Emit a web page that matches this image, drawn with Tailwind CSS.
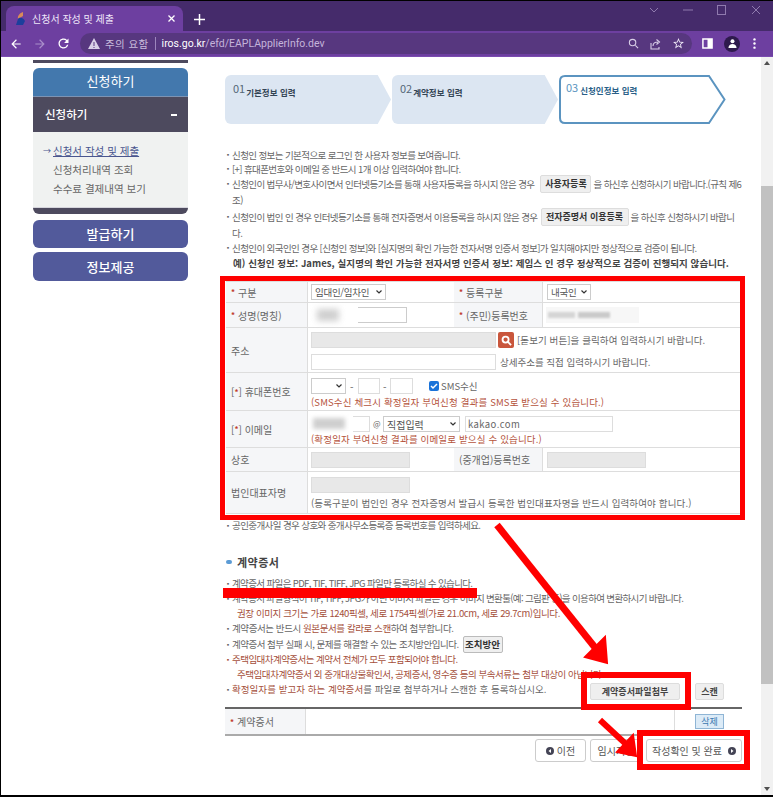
<!DOCTYPE html>
<html lang="ko"><head><meta charset="utf-8"><script src="https://cdn.jsdelivr.net/npm/@tailwindcss/browser@4"></script></head>
<body class="w-[773px] h-[797px] overflow-hidden bg-black font-['Noto_Sans_CJK_KR','Noto_Sans',sans-serif] text-[10px] text-[#666]">
<div class="relative w-[773px] h-[795px] pt-px pl-px bg-black overflow-hidden">
  <!-- browser chrome -->
  <div class="h-[30px] bg-[#452b6b] flex items-end pl-[5px] relative">
    <div class="w-[177px] h-[25px] bg-[#6d3fa0] rounded-t-lg flex items-center pl-[10px] pr-[8px] gap-[7px]">
      <svg class="shrink-0" width="9" height="13" viewBox="0 0 9 13"><path d="M7 0C4 1 1 4 2 7L7 4Z" fill="#d98a5a"/><path d="M2 7C3 5 7 5 9 9L7 13H0Z" fill="#1c3f9c"/></svg>
      <span class="text-[10px] text-[#f0e8fa] flex-1 whitespace-nowrap">신청서 작성 및 제출</span>
      <svg class="shrink-0" width="7" height="7" viewBox="0 0 7 7" stroke="#fff" stroke-width="1.300"><path d="M.5.5l6 6M6.500.5l-6 6"/></svg>
    </div>
    <svg class="ml-[11px] mb-[6px]" width="11" height="11" viewBox="0 0 11 11" stroke="#fff" stroke-width="1.500"><path d="M5.500 0v11M0 5.500h11"/></svg>
    <div class="absolute left-[648px] top-[4px] flex items-center gap-[24px] text-[#8f7aae]">
      <svg width="10" height="10" viewBox="0 0 10 10" fill="none" stroke="currentColor"><path d="M1 3l4 4 4-4"/></svg>
      <svg width="10" height="10" viewBox="0 0 10 10" stroke="currentColor"><path d="M0 5h10"/></svg>
      <svg width="10" height="10" viewBox="0 0 10 10" fill="none" stroke="currentColor"><rect x=".5" y=".5" width="8" height="9"/></svg>
      <svg width="10" height="10" viewBox="0 0 10 10" stroke="currentColor"><path d="M1 1l8 8M9 1l-8 8"/></svg>
    </div>
  </div>
  <div class="h-[26px] bg-[#6d3fa0] flex items-center border-b border-[#7a4bb0] pl-[8px] text-white">
    <svg class="w-[14px] h-[14px]" viewBox="0 0 24 24" fill="#fff"><path d="M20 11H7.830l5.590-5.590L12 4l-8 8 8 8 1.410-1.410L7.830 13H20v-2z"/></svg>
    <svg class="w-[14px] h-[14px] ml-[10px]" viewBox="0 0 24 24" fill="#a98fca"><path d="M12 4l-1.410 1.410L16.170 11H4v2h12.170l-5.580 5.590L12 20l8-8z"/></svg>
    <svg class="w-[15px] h-[15px] ml-[9px]" viewBox="0 0 24 24" fill="#fff"><path d="M17.650 6.350A7.958 7.958 0 0012 4c-4.420 0-7.990 3.580-7.990 8s3.570 8 7.990 8c3.730 0 6.840-2.550 7.730-6h-2.080A5.990 5.990 0 0112 18c-3.310 0-6-2.690-6-6s2.690-6 6-6c1.660 0 3.140.690 4.220 1.780L13 11h7V4l-2.350 2.350z"/></svg>
    <div class="ml-[9px] w-[612px] h-[21px] rounded-full bg-[#57377f] flex items-center pl-[8px] pr-[7px]">
      <svg width="12" height="11" viewBox="0 0 12 11"><path d="M6 0l6 11H0z" fill="#d9cfe8"/><path d="M5.500 4h1v4h-1zM5.500 9h1v1h-1z" fill="#57377f"/></svg>
      <span class="ml-[5px] text-[10.500px] tracking-[0.4px] text-[#c9bcdc] whitespace-nowrap">주의 요함</span>
      <span class="ml-[6px] h-[13px] w-px bg-[#9d86bd]"></span>
      <span class="ml-[6px] text-[10.500px] font-['Roboto'] text-[#c4b4da] whitespace-nowrap"><span class="text-white">iros.go.kr</span>/efd/EAPLApplierInfo.dev</span>
      <span class="flex-1"></span>
      <svg width="11" height="11" viewBox="0 0 12 12" fill="none" stroke="#d9cfe8" stroke-width="1.200"><circle cx="5" cy="5" r="3.500"/><path d="M8 8l3 3"/></svg>
      <svg class="ml-[10px]" width="13" height="12" viewBox="0 0 13 12" fill="none" stroke="#d9cfe8" stroke-width="1.100"><path d="M2 5v6h8V9M4 8c0-3 2-4 5-4M7.500 1.500l3 2.500-3 2.500"/></svg>
      <svg class="ml-[10px]" width="13" height="13" viewBox="0 0 24 24" fill="#efe9f7"><path d="M22 9.240l-7.190-.620L12 2 9.190 8.630 2 9.240l5.460 4.730L5.820 21 12 17.270 18.180 21l-1.630-7.030L22 9.240zM12 15.400l-3.760 2.270 1-4.280-3.320-2.880 4.380-.380L12 6.100l1.710 4.040 4.380.380-3.320 2.880 1 4.280L12 15.400z"/></svg>
    </div>
    <svg class="ml-[10px]" width="11" height="11" viewBox="0 0 12 12"><path d="M1 1h10v10H1z" fill="none" stroke="#fff" stroke-width="1.600"/><path d="M6 1h5v10H6z" fill="#fff"/></svg>
    <div class="ml-[11px] w-[16px] h-[16px] rounded-full bg-[#2e1a4d] flex items-center justify-center"><svg width="9" height="9" viewBox="0 0 9 10" fill="#fff"><circle cx="4.500" cy="2.500" r="2.200"/><path d="M0 10c0-6 9-6 9 0z"/></svg></div>
    <svg class="ml-[13px]" width="3" height="11" viewBox="0 0 3 12" fill="#fff"><circle cx="1.500" cy="1.500" r="1.300"/><circle cx="1.500" cy="6" r="1.300"/><circle cx="1.500" cy="10.500" r="1.300"/></svg>
  </div>

  <!-- page -->
  <div class="h-[738px] bg-white flex">
    <!-- sidebar -->
    <aside class="w-[187px] shrink-0 pl-[32px] pt-[3px]">
      <div class="h-[3px] bg-[#4d4a5e]"></div>
      <div class="mt-[5px] h-[29px] rounded-t-[6px] bg-[#4378ad] text-white text-[13px] flex items-center justify-center border-b border-[#7d93b3] pb-[2px]">신청하기</div>
      <div class="h-[35px] bg-[#4d4a5e] text-white text-[11.500px] font-medium flex items-center justify-between pl-[12px] pr-[11px]"><span>신청하기</span><span class="w-[6px] h-[2px] bg-white"></span></div>
      <div class="h-[76px] bg-[#f0f2f1] pl-[20px] pt-[9px] text-[10.500px] leading-[19px] text-[#666] border-b border-[#d5d5dc]">
        <div class="relative underline text-[#4a568f]"><span class="absolute -left-[10px] text-[8px] no-underline">→</span>신청서 작성 및 제출</div>
        <div>신청처리내역 조회</div>
        <div>수수료 결제내역 보기</div>
      </div>
      <div class="h-[6px] rounded-b-[6px] bg-[#4d4a5e]"></div>
      <div class="mt-[6px] h-[28px] rounded-[6px] bg-[#525a9b] text-white text-[13px] font-medium flex items-center justify-center">발급하기</div>
      <div class="mt-[4px] h-[29px] rounded-[6px] bg-[#525a9b] text-white text-[13px] font-medium flex items-center justify-center">정보제공</div>
    </aside>

    <!-- main -->
    <main class="w-[573px] shrink-0 pl-[37px]">
      <!-- steps -->
      <div class="mt-[18px] flex h-[49px] gap-px">
        <div class="w-[166px] h-[49px] bg-[#dce6f2] rounded-l-[6px] [clip-path:polygon(0_0,92%_0,100%_50%,92%_100%,0_100%)] pl-[8px] pt-[5px] flex items-start text-[#567]"><span class="text-[11px]">01</span><span class="mt-[6px] ml-px text-[8.500px] font-bold text-[#345]">기본정보 입력</span></div>
        <div class="w-[166px] h-[49px] bg-[#dce6f2] rounded-l-[6px] [clip-path:polygon(0_0,92%_0,100%_50%,92%_100%,0_100%)] pl-[8px] pt-[5px] flex items-start text-[#567]"><span class="text-[11px]">02</span><span class="mt-[6px] ml-px text-[8.500px] font-bold text-[#345]">계약정보 입력</span></div>
        <div class="relative w-[167px] h-[49px]">
          <svg class="absolute inset-0" width="167" height="49" viewBox="0 0 167 49"><path d="M6 1H150L165.500 24.500L150 48H6Q1 48 1 43V6Q1 1 6 1Z" fill="#fff" stroke="#5b94c0" stroke-width="2"/></svg>
          <div class="relative pl-[7px] pt-[4px] flex items-start"><span class="text-[11px] text-[#5b94c0]">03</span><span class="mt-[5px] ml-[2px] text-[8.500px] font-bold text-[#2a5f88]">신청인정보 입력</span></div>
        </div>
      </div>

      <!-- notices -->
      <ul class="mt-[24px] text-[9.500px] leading-[14px] text-[#666] tracking-[-0.6px] whitespace-nowrap">
        <li class="pl-[7px] relative before:content-['▪'] before:absolute before:left-0 before:text-[6px]">신청인 정보는 기본적으로 로그인 한 사용자 정보를 보여줍니다.</li>
        <li class="pl-[7px] relative before:content-['▪'] before:absolute before:left-0 before:text-[6px]">[+] 휴대폰번호와 이메일 중 반드시 1개 이상 입력하여야 합니다.</li>
        <li class="pl-[7px] relative before:content-['▪'] before:absolute before:left-0 before:text-[6px] before:top-[2px]"><div class="flex items-center h-[18px] -mt-px">신청인이 법무사/변호사이면서 인터넷등기소를 통해 사용자등록을 하시지 않은 경우<span class="ml-[6px] mr-[2px] w-[51px] h-[18px] leading-[16px] text-center bg-[#efefef] border border-[#ddd] rounded-[2px] font-bold text-[#333] tracking-normal text-[9px]">사용자등록</span>을 하신후 신청하시기 바랍니다.(규칙 제6</div><div class="h-[14px]">조)</div></li>
        <li class="pl-[7px] relative mt-[1px] before:content-['▪'] before:absolute before:left-0 before:text-[6px] before:top-[2px]"><div class="flex items-center h-[18px]">신청인이 법인 인 경우 인터넷등기소를 통해 전자증명서 이용등록을 하시지 않은 경우<span class="ml-[3px] mr-[2px] w-[88px] h-[18px] leading-[16px] text-center bg-[#efefef] border border-[#ddd] rounded-[2px] font-bold text-[#333] tracking-normal text-[9px]">전자증명서 이용등록</span>을 하신후 신청하시기 바랍니</div><div class="h-[15px]">다.</div></li>
        <li class="pl-[7px] relative before:content-['▪'] before:absolute before:left-0 before:text-[6px]">신청인이 외국인인 경우 [신청인 정보]와 [실지명의 확인 가능한 전자서명 인증서 정보]가 일치해야지만 정상적으로 검증이 됩니다.</li>
        <li class="pl-[8px] font-bold text-[#444] tracking-[0.07px] leading-[15px] mt-[1px]">예) 신청인 정보: James, 실지명의 확인 가능한 전자서명 인증서 정보: 제임스 인 경우 정상적으로 검증이 진행되지 않습니다.</li>
      </ul>

      <!-- form table -->
      <div class="mt-[10px] ml-px w-[514px] border-t border-[#ddd] text-[10px] text-[#666]">
        <div class="grid grid-cols-[81px_147px_88px_1fr] h-[21px] border-b border-[#ddd]">
          <div class="bg-[#f5f6f8] flex items-center pl-[5px]"><b class="text-[#c0392b] mr-[3px] text-[8px]">*</b>구분</div>
          <div class="flex items-center pl-[3px] border-l border-[#ddd]"><span class="w-[75px] h-[16px] border border-[#ccc] flex items-center justify-between px-[3px] text-[#555] whitespace-nowrap text-[9.500px] tracking-[-0.3px]">임대인/임차인<svg class="shrink-0" width="6" height="4" viewBox="0 0 6 4" fill="none" stroke="#333" stroke-width="1.200"><path d="M.5.500l2.500 2.500L5.500.500"/></svg></span></div>
          <div class="bg-[#f5f6f8] flex items-center pl-[5px]"><b class="text-[#c0392b] mr-[3px] text-[8px]">*</b>등록구분</div>
          <div class="flex items-center pl-[4px] border-l border-[#ddd]"><span class="w-[44px] h-[16px] border border-[#ccc] flex items-center justify-between px-[3px] text-[#555] whitespace-nowrap text-[9.500px] tracking-[-0.3px]">내국인<svg class="shrink-0" width="6" height="4" viewBox="0 0 6 4" fill="none" stroke="#333" stroke-width="1.200"><path d="M.5.500l2.500 2.500L5.500.500"/></svg></span></div>
        </div>
        <div class="grid grid-cols-[81px_147px_88px_1fr] h-[25px] border-b border-[#ddd]">
          <div class="bg-[#f5f6f8] flex items-center pl-[5px]"><b class="text-[#c0392b] mr-[3px] text-[8px]">*</b>성명(명칭)</div>
          <div class="flex items-center pl-[3px] border-l border-[#ddd]"><span class="relative w-[96px] h-[16px] border border-[#ccc]"><span class="absolute -left-px -top-px w-[47px] h-[16px] bg-white"></span><span class="absolute left-[5px] top-[1px] w-[22px] h-[12px] bg-[#cfcfcf] blur-[3px]"></span></span></div>
          <div class="bg-[#f5f6f8] flex items-center pl-[5px]"><b class="text-[#c0392b] mr-[3px] text-[8px]">*</b>(주민)등록번호</div>
          <div class="flex items-center pl-[3px] border-l border-[#ddd]"><span class="w-[93px] h-[16px] bg-[#f7f7f7] flex items-center pl-[2px] gap-[3px]"><span class="w-[27px] h-[6px] bg-[#d5d5d5] blur-[1px]"></span><span class="w-[32px] h-[6px] bg-[#cacaca] blur-[1px]"></span></span></div>
        </div>
        <div class="grid grid-cols-[81px_1fr] h-[45px] border-b border-[#ddd]">
          <div class="bg-[#f5f6f8] flex items-center pl-[5px]">주소</div>
          <div class="border-l border-[#ddd] pl-[3px] pt-[4px] flex flex-col gap-[6px]">
            <div class="flex items-center h-[16px]"><span class="w-[185px] h-[16px] bg-[#e8e8e8] border border-[#ddd]"></span><span class="ml-[2px] w-[16px] h-[16px] rounded-[2px] bg-[#c9563c] flex items-center justify-center"><svg width="11" height="11" viewBox="0 0 12 12" fill="none" stroke="#fff" stroke-width="2"><circle cx="5" cy="5" r="3.300"/><path d="M7.500 7.500l3.500 3.500"/></svg></span><span class="ml-[3px] whitespace-nowrap text-[9.500px] tracking-[0.1px]">[돋보기 버튼]을 클릭하여 입력하시기 바랍니다.</span></div>
            <div class="flex items-center h-[16px]"><span class="w-[185px] h-[16px] border border-[#ddd]"></span><span class="ml-[4px] whitespace-nowrap text-[9.500px]">상세주소를 직접 입력하시기 바랍니다.</span></div>
          </div>
        </div>
        <div class="grid grid-cols-[81px_1fr] h-[38px] border-b border-[#ddd]">
          <div class="bg-[#f5f6f8] flex items-center pl-[5px]">[<b class="text-[#c0392b] text-[8px]">*</b>] 휴대폰번호</div>
          <div class="border-l border-[#ddd] pl-[3px] pt-[5px]">
            <div class="flex items-center h-[16px]"><span class="w-[35px] h-[16px] border border-[#ccc] flex items-center justify-end pr-[3px]"><svg width="6" height="4" viewBox="0 0 6 4" fill="none" stroke="#333" stroke-width="1.200"><path d="M.5.500l2.500 2.500L5.500.500"/></svg></span><span class="mx-[4px] w-[4px]">-</span><span class="w-[22px] h-[16px] border border-[#ddd]"></span><span class="mx-[3px] w-[4px]">-</span><span class="w-[23px] h-[16px] border border-[#ddd]"></span><span class="ml-[16px] w-[10px] h-[10px] rounded-[2px] bg-[#1a73d9] flex items-center justify-center"><svg width="8" height="8" viewBox="0 0 8 8" fill="none" stroke="#fff" stroke-width="1.500"><path d="M1 4l2 2 4-4"/></svg></span><span class="ml-[2px] text-[9.500px]">SMS수신</span></div>
            <div class="mt-px text-[#b5533c] text-[9.500px] leading-[14px] whitespace-nowrap tracking-[0.15px]">(SMS수신 체크시 확정일자 부여신청 결과를 SMS로 받으실 수 있습니다.)</div>
          </div>
        </div>
        <div class="grid grid-cols-[81px_1fr] h-[37px] border-b border-[#ddd]">
          <div class="bg-[#f5f6f8] flex items-center pl-[5px]">[<b class="text-[#c0392b] text-[8px]">*</b>] 이메일</div>
          <div class="border-l border-[#ddd] pl-[3px] pt-[5px]">
            <div class="flex items-center h-[16px]"><span class="relative w-[59px] h-[16px] border border-[#ddd]"><span class="absolute -left-px -top-px -bottom-px w-[42px] bg-white"></span><span class="absolute left-[1px] top-[1px] w-[32px] h-[11px] bg-[#cfcfcf] blur-[2px]"></span></span><span class="mx-[3px] w-[7px] text-[8px]">@</span><span class="w-[77px] h-[16px] border border-[#ccc] flex items-center justify-between px-[3px] text-[#555]">직접입력<svg width="6" height="4" viewBox="0 0 6 4" fill="none" stroke="#333" stroke-width="1.200"><path d="M.5.500l2.500 2.500L5.500.500"/></svg></span><span class="ml-[5px] w-[148px] h-[16px] border border-[#ddd] pl-[2px] leading-[15px] text-[9.500px] tracking-[0.4px]">kakao.com</span></div>
            <div class="text-[#b5533c] text-[9.500px] leading-[15px] whitespace-nowrap tracking-[0.15px]">(확정일자 부여신청 결과를 이메일로 받으실 수 있습니다.)</div>
          </div>
        </div>
        <div class="grid grid-cols-[81px_147px_88px_1fr] h-[24px] border-b border-[#ddd]">
          <div class="bg-[#f5f6f8] flex items-center pl-[5px]">상호</div>
          <div class="flex items-center pl-[3px] border-l border-[#ddd]"><span class="w-[99px] h-[16px] bg-[#e8e8e8] border border-[#ddd]"></span></div>
          <div class="bg-[#f5f6f8] flex items-center pl-[5px]">(중개업)등록번호</div>
          <div class="flex items-center pl-[4px] border-l border-[#ddd]"><span class="w-[99px] h-[16px] bg-[#e8e8e8] border border-[#ddd]"></span></div>
        </div>
        <div class="grid grid-cols-[81px_1fr] h-[42px] border-b border-[#ddd]">
          <div class="bg-[#f5f6f8] flex items-center pl-[5px]">법인대표자명</div>
          <div class="border-l border-[#ddd] pl-[3px] pt-[5px]"><div class="w-[99px] h-[16px] bg-[#e8e8e8] border border-[#ddd]"></div><div class="mt-[3px] text-[9.500px] leading-[14px] whitespace-nowrap tracking-[0.13px]">(등록구분이 법인인 경우 전자증명서 발급시 등록한 법인대표자명을 반드시 입력하여야 합니다.)</div></div>
        </div>
      </div>
      <div class="mt-[4px] pl-[7px] relative text-[9.500px] leading-[15px] text-[#666] tracking-[-0.6px] before:content-['▪'] before:absolute before:left-0 before:text-[6px]">공인중개사일 경우 상호와 중개사무소등록증 등록번호를 입력하세요.</div>

      <!-- contract -->
      <div class="mt-[21px] flex items-center h-[16px] text-[11px] tracking-[0.5px] font-bold text-[#444]"><span class="ml-px w-[6px] h-[4px] rounded-full bg-[#5b9bd5] mr-[5px]"></span>계약증서</div>
      <ul class="mt-[6px] text-[9.500px] leading-[15px] text-[#666] whitespace-nowrap">
        <li class="pl-[7px] relative tracking-[-0.63px] before:content-['▪'] before:absolute before:left-0 before:text-[6px]">계약증서 파일은 PDF, TIF, TIFF, JPG 파일만 등록하실 수 있습니다.</li>
        <li class="pl-[7px] relative tracking-[-0.65px] before:content-['▪'] before:absolute before:left-0 before:text-[6px]">계약증서 파일형식이 TIF, TIFF, JPG가 아닌 이미지 파일은 경우 이미지 변환툴(예: 그림판 등)을 이용하여 변환하시기 바랍니다.</li>
        <li class="pl-[12px] tracking-[-0.4px] text-[#a5503c]">권장 이미지 크기는 가로 1240픽셀, 세로 1754픽셀(가로 21.0cm, 세로 29.7cm)입니다.</li>
        <li class="pl-[7px] relative tracking-[-0.42px] before:content-['▪'] before:absolute before:left-0 before:text-[6px]">계약증서는 반드시 <span class="text-[#a5503c]">원본문서를 칼라로 스캔</span>하여 첨부합니다.</li>
        <li class="pl-[7px] h-[16px] relative flex items-center tracking-[-0.53px] before:content-['▪'] before:absolute before:left-0 before:text-[6px]">계약증서 첨부 실패 시, 문제를 해결할 수 있는 조치방안입니다.<span class="ml-[4px] w-[40px] h-[17px] text-center leading-[15px] bg-[#efefef] border border-[#bbb] rounded-[2px] font-bold text-[#333] tracking-normal">조치방안</span></li>
        <li class="pl-[7px] relative tracking-[-0.55px] text-[#a5503c] before:content-['▪'] before:absolute before:left-0 before:text-[6px]">주택임대차계약증서는 계약서 전체가 모두 포함되어야 합니다.</li>
        <li class="pl-[12px] tracking-[-0.45px] text-[#a5503c]">주택임대차계약증서 외 중개대상물확인서, 공제증서, 영수증 등의 부속서류는 첨부 대상이 아닙니다.</li>
        <li class="pl-[7px] h-[17px] relative flex items-start tracking-[0.05px] before:content-['▪'] before:absolute before:left-0 before:text-[6px]"><span><span class="text-[#a5503c]">확정일자를 받고자 하는 계약증서</span>를 파일로 첨부하거나 스캔한 후 등록하십시오.</span>
          <span class="absolute left-[365px] top-[1px] w-[90px] h-[17px] bg-[#efefef] border border-[#ddd] rounded-[2px] text-center leading-[15px] font-bold text-[#444] text-[9px]">계약증서파일첨부</span>
          <span class="absolute left-[470px] top-[1px] w-[29px] h-[17px] bg-[#efefef] border border-[#ddd] rounded-[2px] text-center leading-[15px] font-bold text-[#444] text-[9px]">스캔</span>
        </li>
      </ul>
      <div class="mt-[8px] w-[517px] h-[29px] border-t-2 border-b-2 border-t-[#666] border-b-[#aaa] flex text-[10px] text-[#666]">
        <div class="w-[81px] bg-[#f5f6f8] flex items-center pl-[5px] border-r border-[#ddd]"><b class="text-[#c0392b] mr-[3px] text-[8px]">*</b>계약증서</div>
        <div class="flex-1 border-r border-[#ddd]"></div>
        <div class="w-[67px] flex items-center pl-[20px]"><span class="w-[29px] h-[15px] bg-[#dcebf7] border border-[#8fb5d5] text-[#3a78b0] text-[9px] leading-[13px] text-center">삭제</span></div>
      </div>
      <div class="mt-[3px] w-[517px] flex justify-end gap-[4px] text-[10px] text-[#555]">
        <span class="w-[51px] h-[23px] border border-[#ccc] rounded-[3px] flex items-center justify-center gap-[3px]"><svg width="8" height="8" viewBox="0 0 8 8"><circle cx="4" cy="4" r="4" fill="#445"/><path d="M5 2L2.500 4 5 6z" fill="#fff"/></svg>이전</span>
        <span class="w-[52px] h-[23px] border border-[#ccc] rounded-[3px] flex items-center justify-center whitespace-nowrap">임시저장</span>
        <span class="w-[96px] h-[23px] border border-[#ccc] rounded-[3px] flex items-center justify-center gap-[6px] whitespace-nowrap">작성확인 및 완료<svg width="8" height="8" viewBox="0 0 8 8"><circle cx="4" cy="4" r="4" fill="#445"/><path d="M3 2l2.500 2L3 6z" fill="#fff"/></svg></span>
      </div>
    </main>

    <!-- scrollbar -->
    <div class="w-[12px] shrink-0 ml-auto bg-[#f1f1f1] flex flex-col items-center justify-between py-[4px] relative">
      <span class="w-0 h-0 border-x-[3px] border-x-transparent border-b-[4px] border-b-[#505050]"></span>
      <span class="absolute left-0 top-[129px] w-[12px] h-[498px] bg-[#c1c1c1]"></span>
      <span class="w-0 h-0 border-x-[3px] border-x-transparent border-t-[4px] border-t-[#505050]"></span>
    </div>
  </div>

  <!-- annotations over the screenshot -->
  <div class="absolute left-[220px] top-[276px] w-[525px] h-[244px] border-[5px] border-[#f00]"></div>
  <div class="absolute left-[223px] top-[588px] w-[254px] h-[10px] bg-[#f00]"></div>
  <div class="absolute left-[581px] top-[672px] w-[110px] h-[38px] border-[6px] border-[#f00]"></div>
  <div class="absolute left-[637px] top-[730px] w-[113px] h-[40px] border-[6px] border-[#f00]"></div>
  <svg class="absolute left-0 top-0 pointer-events-none" width="773" height="797" viewBox="0 0 773 797"><path d="M497 525L597 650" stroke="#f00" stroke-width="7"/><path d="M585 657L607 663L605 637Z" fill="#f00" stroke="#f00" stroke-width="2"/><path d="M600 720L628 746" stroke="#f00" stroke-width="6"/><path d="M617 752L636 756L633 735Z" fill="#f00" stroke="#f00" stroke-width="2"/></svg>
</div>
</body></html>
